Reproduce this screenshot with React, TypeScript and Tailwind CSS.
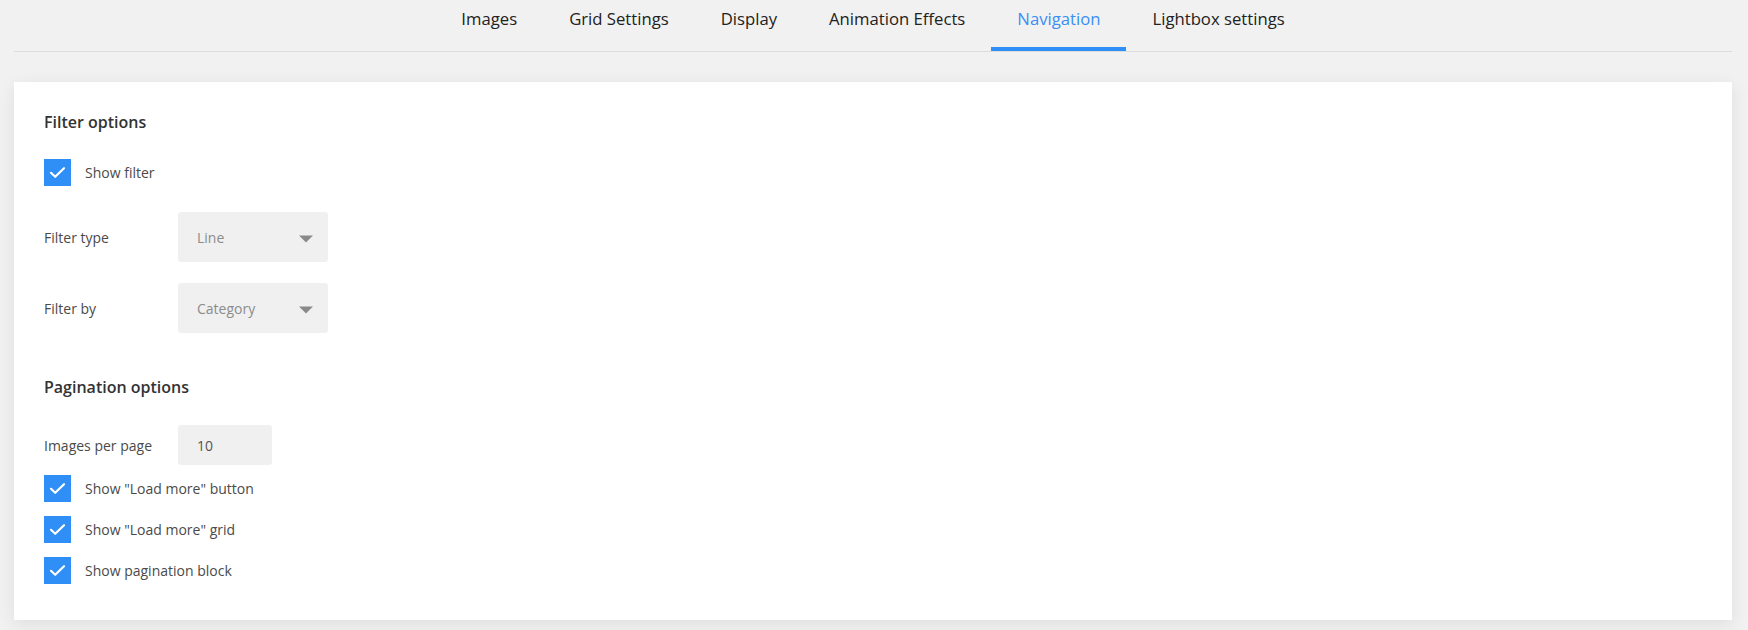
const tabs = [
  "Images",
  "Grid Settings",
  "Display",
  "Animation Effects",
  "Navigation",
  "Lightbox settings",
];

const Check = ({ label, className = "" }: { label: string; className?: string }) => {
  return (
    <label className={`flex items-center gap-[14px] ${className}`}>
      <span className="w-[27px] h-[27px] bg-[#2f8ff7] flex items-center justify-center">
        <svg width="17" height="13" viewBox="0 0 17 13" fill="none">
          <path
            d="M2 6.8 L6.2 10.8 L15 2.2"
            stroke="white"
            strokeWidth="2.2"
            strokeLinecap="round"
            strokeLinejoin="round"
          />
        </svg>
      </span>
      <span className="text-[14px] text-[#4a4a4a]">{label}</span>
    </label>
  );
};

const Select = ({ label, value, className = "" }: { label: string; value: string; className?: string }) => {
  return (
    <div className={`flex items-center ${className}`}>
      <span className="w-[134px] text-[14px] text-[#4a4a4a]">{label}</span>
      <div className="w-[150px] h-[50px] bg-[#f0f0f0] rounded-[3px] flex items-center justify-between pl-[19px] pr-[15px]">
        <span className="text-[14px] text-[#8c8c8c]">{value}</span>
        <svg width="14" height="8" viewBox="0 0 14 8" className="mt-[4px]">
          <path d="M0 0.5 H14 L7 7.5 Z" fill="#8a8a8a" />
        </svg>
      </div>
    </div>
  );
};

export default function App() {
  return (
    <div className="min-h-screen bg-[#f1f1f1] font-['Open_Sans',sans-serif] pb-[9px]">
      <div className="ml-[14px] mr-[16px] border-b border-[#dcdcdc] flex justify-center">
        {tabs.map((t) => (
          <div
            key={t}
            className={`px-[26px] pt-[7px] pb-[16px] border-b-4 text-[16.7px] leading-[24px] ${
              t === "Navigation"
                ? "border-[#2f8ff7] text-[#3a8ef5]"
                : "border-transparent text-[#222]"
            }`}
          >
            {t}
          </div>
        ))}
      </div>

      <div className="ml-[14px] mr-[16px] mt-[30px] bg-white shadow-[0_4px_16px_rgba(0,0,0,0.08)] pl-[30px] pt-[29px] pb-[36px]">
        <h3 className="text-[16px] leading-[22px] font-semibold text-[#333]">Filter options</h3>
        <Check label="Show filter" className="mt-[26px]" />
        <Select label="Filter type" value="Line" className="mt-[26px]" />
        <Select label="Filter by" value="Category" className="mt-[21px]" />

        <h3 className="mt-[43px] text-[16px] leading-[22px] font-semibold text-[#333]">Pagination options</h3>
        <div className="mt-[27px] flex items-center">
          <span className="w-[134px] text-[14px] text-[#4a4a4a]">Images per page</span>
          <div className="w-[94px] h-[40px] bg-[#f0f0f0] rounded-[3px] flex items-center pl-[19px] text-[14px] text-[#555]">
            10
          </div>
        </div>
        <Check label={'Show "Load more" button'} className="mt-[10px]" />
        <Check label={'Show "Load more" grid'} className="mt-[14px]" />
        <Check label="Show pagination block" className="mt-[14px]" />
      </div>
    </div>
  );
}
